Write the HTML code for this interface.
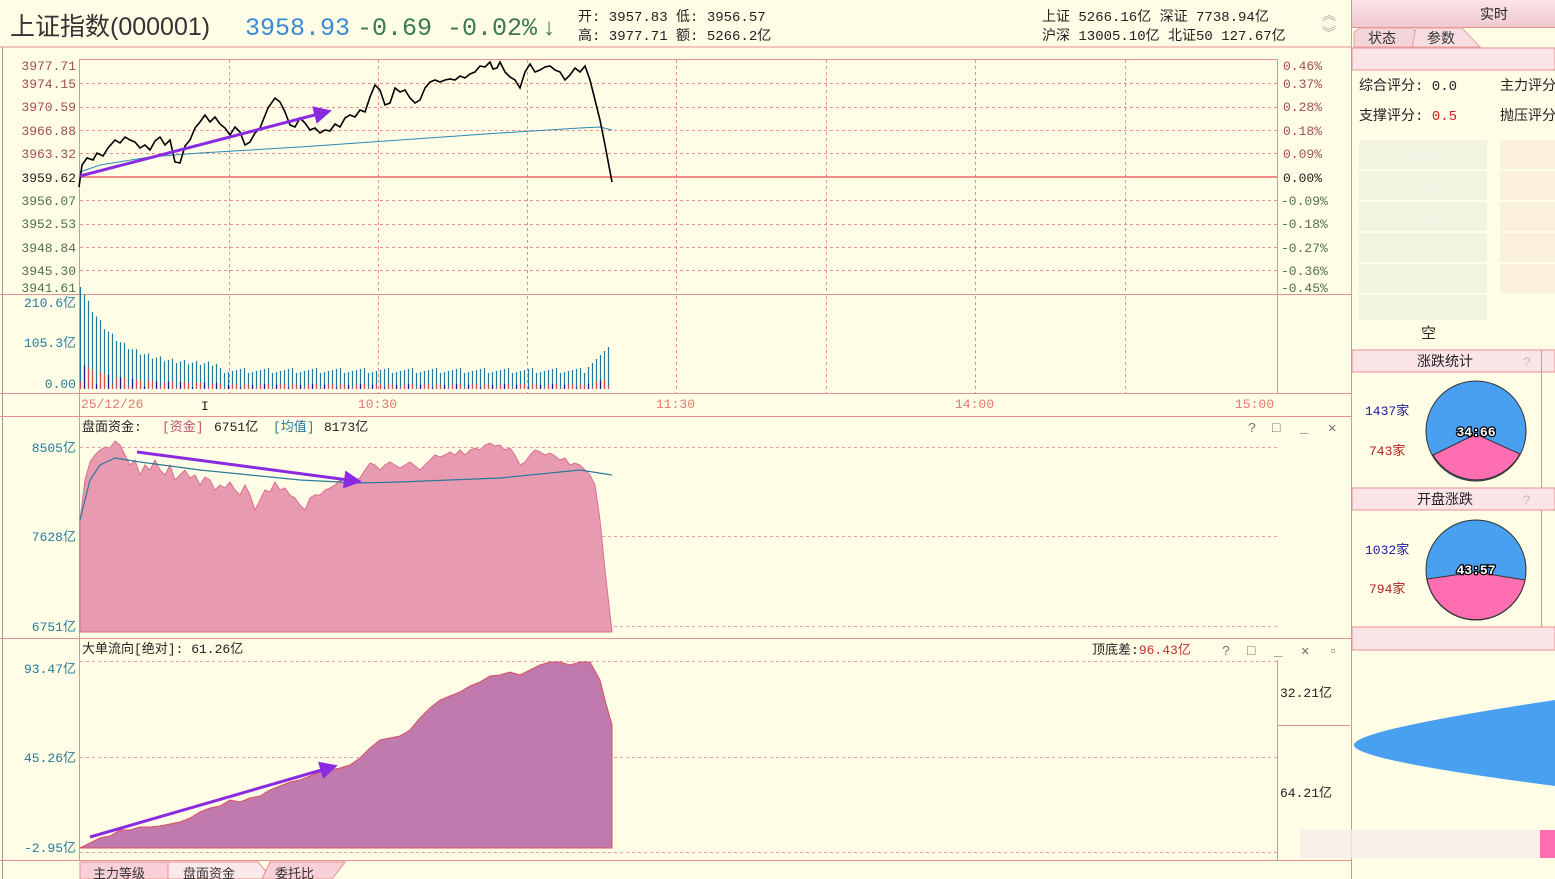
<!DOCTYPE html>
<html><head><meta charset="utf-8"><style>
html,body{margin:0;padding:0;background:#fffde6;width:1555px;height:879px;overflow:hidden}
svg{display:block;font-family:"Liberation Mono","Noto Sans CJK SC",monospace}
.pl{paint-order:stroke;stroke:#000;stroke-width:2.5px;fill:#fff;font-weight:bold}
</style></head><body>
<svg width="1555" height="879" viewBox="0 0 1555 879" xmlns="http://www.w3.org/2000/svg">
<defs>
<linearGradient id="hg" x1="0" y1="0" x2="0" y2="1"><stop offset="0" stop-color="#fbe6ea"/><stop offset="1" stop-color="#f0c8d0"/></linearGradient>
<marker id="ah" markerWidth="6" markerHeight="6" refX="4" refY="3" orient="auto"><path d="M0,0 L6,3 L0,6 z" fill="#8a2be2"/></marker>
</defs>
<rect width="1555" height="879" fill="#fffde6"/>
<line x1="0" y1="47" x2="1352" y2="47" stroke="#e89090"/>
<text x="10" y="35" font-size="25" fill="#333" font-family="Liberation Sans,Noto Sans CJK SC,sans-serif">上证指数(000001)</text>
<text x="245" y="35" font-size="25" fill="#3a8ad8">3958.93</text>
<text x="357" y="35" font-size="25" fill="#3a7a50">-0.69  -0.02%</text>
<text x="542" y="35" font-size="24" fill="#3a7a50">↓</text>
<g font-size="14" fill="#222"><text x="578" y="21">开: 3957.83  低: 3956.57</text><text x="578" y="40">高: 3977.71  额: 5266.2亿</text>
<text x="1042" y="21">上证 5266.16亿  深证 7738.94亿</text><text x="1042" y="40">沪深 13005.10亿  北证50 127.67亿</text></g>
<text x="1322" y="20" font-size="14" fill="#aaa">︽</text><text x="1322" y="38" font-size="14" fill="#aaa">︾</text>
<line x1="1351.5" y1="0" x2="1351.5" y2="879" stroke="#e89090"/>
<line x1="2.5" y1="47" x2="2.5" y2="879" stroke="#999"/>
<rect x="79.5" y="59.5" width="1198" height="235" fill="none" stroke="#e89090"/>
<g stroke="#e89090" stroke-dasharray="3,3" fill="none">
<path d="M80 83.5H1277M80 107.5H1277M80 130.5H1277M80 153.5H1277M80 200.5H1277M80 224.5H1277M80 247.5H1277M80 270.5H1277"/>
<path d="M229.5 60V294M378.5 60V294M527.5 60V294M676.5 60V294M826.5 60V294M975.5 60V294M1125.5 60V294"/>
<path d="M229.5 296V393M378.5 296V393M527.5 296V393M676.5 296V393M826.5 296V393M975.5 296V393M1125.5 296V393"/>
</g>
<line x1="80" y1="177" x2="1277" y2="177" stroke="#e86a6a" stroke-width="1.5"/>
<g font-size="13" fill="#a05050" text-anchor="end">
<text x="76" y="70">3977.71</text><text x="76" y="88">3974.15</text><text x="76" y="111">3970.59</text><text x="76" y="135">3966.88</text><text x="76" y="158">3963.32</text><text x="76" y="182" fill="#222">3959.62</text>
<text x="76" y="205" fill="#507050">3956.07</text><text x="76" y="228" fill="#507050">3952.53</text><text x="76" y="252" fill="#507050">3948.84</text><text x="76" y="275" fill="#507050">3945.30</text><text x="76" y="292" fill="#507050">3941.61</text></g>
<g font-size="13" fill="#a05050"><text x="1283" y="70">0.46%</text><text x="1283" y="88">0.37%</text><text x="1283" y="111">0.28%</text><text x="1283" y="135">0.18%</text><text x="1283" y="158">0.09%</text><text x="1283" y="182" fill="#222">0.00%</text>
<g fill="#507050"><text x="1281" y="205">-0.09%</text><text x="1281" y="228">-0.18%</text><text x="1281" y="252">-0.27%</text><text x="1281" y="275">-0.36%</text><text x="1281" y="292">-0.45%</text></g></g>
<polyline fill="none" stroke="#2a8ab0" stroke-width="1" points="80,172 100,165 150,157 200,153 300,147 400,140 500,133 580,128 600,127 612,130"/>
<polyline fill="none" stroke="#000" stroke-width="1.6" points="79,187 82,165 87,158 93,160 97,153 103,156 108,148 115,140 120,143 125,137 130,140 135,142 140,148 145,145 150,150 155,141 160,137 165,145 170,140 175,162 180,163 185,146 190,140 195,128 200,122 205,115 210,122 215,117 220,124 225,128 230,135 235,127 240,132 245,145 250,142 255,133 260,128 268,108 275,98 280,102 285,112 290,125 295,127 300,118 305,123 310,130 315,128 320,133 325,130 330,131 335,124 340,127 345,118 350,115 355,117 360,110 365,112 370,97 375,85 380,90 385,105 390,103 395,88 400,92 405,90 410,98 415,103 420,100 425,88 430,82 435,80 440,82 445,80 450,79 455,80 460,76 465,78 470,74 475,72 480,66 485,67 490,62 493,69 497,68 500,62 505,72 510,77 515,80 520,88 525,72 530,64 535,72 540,70 545,67 550,66 555,70 560,72 565,80 570,75 575,68 580,72 585,66 590,80 595,100 600,120 605,145 612,182"/>
<line x1="80" y1="176" x2="326" y2="112" stroke="#8a2be2" stroke-width="3" marker-end="url(#ah)"/>
<line x1="0" y1="294.5" x2="1352" y2="294.5" stroke="#e89090"/>
<line x1="0" y1="393.5" x2="1352" y2="393.5" stroke="#e89090"/>
<line x1="1277.5" y1="295" x2="1277.5" y2="393" stroke="#e89090"/>
<g font-size="13" fill="#2a7a9a" text-anchor="end"><text x="76" y="307">210.6亿</text><text x="76" y="347">105.3亿</text><text x="76" y="388">0.00</text></g>
<g id="vb"></g>
<line x1="79.5" y1="295" x2="79.5" y2="860" stroke="#e89090"/>
<g font-size="13" fill="#e07a70"><text x="81" y="408">25/12/26</text><text x="358" y="408">10:30</text><text x="656" y="408">11:30</text><text x="955" y="408">14:00</text><text x="1235" y="408">15:00</text></g>
<text x="201" y="410" font-size="13" fill="#222">I</text>
<line x1="0" y1="416.5" x2="1352" y2="416.5" stroke="#e89090"/>
<g font-size="13"><text x="82" y="431" fill="#222">盘面资金:</text><text x="162" y="431" fill="#c05070">[资金]</text><text x="214" y="431" fill="#222">6751亿</text><text x="273" y="431" fill="#2a7a9a">[均值]</text><text x="324" y="431" fill="#222">8173亿</text></g>
<g font-size="14" fill="#777"><text x="1248" y="432">?</text><text x="1272" y="432">□</text><text x="1300" y="432">_</text><text x="1328" y="432">✕</text></g>
<g stroke="#e8a0a0" stroke-dasharray="3,3"><line x1="80" y1="447.5" x2="1277" y2="447.5"/><line x1="80" y1="536.5" x2="1277" y2="536.5"/><line x1="80" y1="626.5" x2="1277" y2="626.5"/></g>
<g font-size="13" fill="#2a7a9a" text-anchor="end"><text x="76" y="452">8505亿</text><text x="76" y="541">7628亿</text><text x="76" y="631">6751亿</text></g>
<polygon fill="#e89ab0" stroke="#d87090" points="80,632 80,520 85,480 90,462 95,455 100,450 105,447 110,448 115,441 120,445 125,455 130,465 135,460 140,475 145,465 150,470 155,460 160,470 165,475 170,465 175,480 180,475 185,470 190,478 195,475 200,485 205,477 210,480 215,490 220,485 225,488 230,482 235,490 240,495 245,485 250,495 255,510 260,500 265,490 270,492 275,482 280,490 285,488 290,495 295,498 300,505 305,510 310,498 315,495 320,495 325,490 330,488 335,485 340,480 345,485 350,482 355,480 360,478 365,470 370,463 375,465 380,470 385,465 390,462 395,465 400,468 405,465 410,462 415,466 420,470 425,465 430,460 435,455 440,457 445,455 450,452 455,455 460,450 465,455 470,450 475,448 480,450 485,445 490,443 495,446 500,445 505,450 510,448 515,455 520,465 525,462 530,455 535,450 540,452 545,455 550,453 555,456 560,460 565,458 570,465 575,463 580,465 585,470 590,475 595,485 600,520 605,570 612,632"/>
<polyline fill="none" stroke="#2a7a9a" stroke-width="1.2" points="80,520 90,480 100,465 115,458 140,462 200,470 300,480 360,483 400,482 500,478 580,470 612,475"/>
<line x1="137" y1="452" x2="356" y2="481" stroke="#8a2be2" stroke-width="3" marker-end="url(#ah)"/>
<line x1="0" y1="638.5" x2="1352" y2="638.5" stroke="#e89090"/>
<text x="82" y="653" font-size="13" fill="#222">大单流向[绝对]:  61.26亿</text>
<text x="1092" y="654" font-size="13" fill="#222">顶底差:<tspan fill="#c03030">96.43亿</tspan></text>
<g font-size="14" fill="#777"><text x="1222" y="655">?</text><text x="1247" y="655">□</text><text x="1274" y="655">_</text><text x="1301" y="655">✕</text><text x="1329" y="655">▫</text></g>
<g stroke="#e8a0a0" stroke-dasharray="3,3"><line x1="80" y1="661.5" x2="1277" y2="661.5"/><line x1="80" y1="757.5" x2="1277" y2="757.5"/><line x1="80" y1="852.5" x2="1277" y2="852.5"/></g>
<g font-size="13" fill="#2a7a9a" text-anchor="end"><text x="76" y="673">93.47亿</text><text x="76" y="762">45.26亿</text><text x="76" y="852">-2.95亿</text></g>
<polygon fill="#c07aae" stroke="#d85060" points="80,848 90,843 100,838 110,836 120,830 130,830 140,827 150,827 160,826 170,824 180,822 190,818 200,812 210,808 220,806 230,800 240,802 250,798 260,796 270,790 280,786 290,782 300,780 310,776 320,772 330,770 340,768 350,765 360,758 370,748 380,740 390,738 400,736 410,730 420,718 430,708 440,700 450,696 460,692 470,686 480,682 490,676 500,675 510,672 520,675 530,670 540,665 550,662 560,662 570,665 580,662 590,662 600,680 605,700 612,725 612,848"/>
<line x1="90" y1="837" x2="332" y2="767" stroke="#8a2be2" stroke-width="3" marker-end="url(#ah)"/>
<line x1="1277.5" y1="660" x2="1277.5" y2="860" stroke="#e89090"/>
<line x1="1278" y1="725.5" x2="1350" y2="725.5" stroke="#e89090"/>
<g font-size="13" fill="#222"><text x="1280" y="697">32.21亿</text><text x="1280" y="797">64.21亿</text></g>
<line x1="0" y1="860.5" x2="1352" y2="860.5" stroke="#e89090"/>
<path d="M80 879V862H168V879Z" fill="#f8d0d8" stroke="#e89090"/>
<path d="M168 879V862H258L272 879Z" fill="#fbe8ea" stroke="#e89090"/>
<path d="M262 879L270 862H345L332 879Z" fill="#f8d0d8" stroke="#e89090"/>
<g font-size="13" fill="#333"><text x="93" y="878">主力等级</text><text x="183" y="878">盘面资金</text><text x="275" y="878">委托比</text></g>
<rect x="1352" y="0" width="203" height="27" fill="url(#hg)"/>
<text x="1480" y="19" font-size="14" fill="#222">实时</text>
<line x1="1352" y1="27.5" x2="1555" y2="27.5" stroke="#e89090"/>
<path d="M1354 47V32L1360 28H1412L1430 47Z" fill="#f3d5da" stroke="#e8a0a0"/>
<path d="M1412 47L1416 28H1462L1480 47Z" fill="#f8dde2" stroke="#e8a0a0"/>
<g font-size="14" fill="#333"><text x="1368" y="43">状态</text><text x="1427" y="43">参数</text></g>
<rect x="1352" y="48" width="203" height="22" fill="#fbe4e8" stroke="#e89090"/>
<g font-size="14" fill="#222"><text x="1359" y="90">综合评分:  0.0</text><text x="1500" y="90">主力评分</text><text x="1359" y="120">支撑评分:  <tspan fill="#d02020">0.5</tspan></text><text x="1500" y="120">抛压评分</text></g>
<g fill="#f1f4e0"><rect x="1359" y="140" width="128" height="29"/><rect x="1359" y="171" width="128" height="29"/><rect x="1359" y="202" width="128" height="29"/><rect x="1359" y="233" width="128" height="29"/><rect x="1359" y="264" width="128" height="29"/><rect x="1359" y="295" width="128" height="25"/></g>
<g fill="#fbf0dc"><rect x="1500" y="140" width="55" height="29"/><rect x="1500" y="171" width="55" height="29"/><rect x="1500" y="202" width="55" height="29"/><rect x="1500" y="233" width="55" height="29"/><rect x="1500" y="264" width="55" height="29"/></g>
<g font-size="13" fill="#f6f7ea"><text x="1410" y="160">-2.5</text><text x="1410" y="191">-2.0</text><text x="1410" y="222">-1.5</text><text x="1410" y="253">-1.0</text><text x="1410" y="284">-0.5</text></g>
<text x="1421" y="338" font-size="15" fill="#222">空</text>
<rect x="1352" y="350" width="203" height="22" fill="#fbe4e8" stroke="#e89090"/>
<text x="1417" y="366" font-size="14" fill="#222">涨跌统计</text><text x="1523" y="366" font-size="13" fill="#bbb">?</text>
<line x1="1541.5" y1="350" x2="1541.5" y2="627" stroke="#e89090"/>
<text x="1365" y="415" font-size="13" fill="#1a1aa0">1437家</text><text x="1369" y="455" font-size="13" fill="#b02020">743家</text>
<circle cx="1476" cy="431" r="50" fill="#4aa0f0" stroke="#333"/>
<path d="M1476 434 L1433 455 A50 50 0 0 0 1520 454 Z" fill="#ff6eb0" stroke="#333"/>
<text x="1476" y="436" font-size="13" class="pl" text-anchor="middle">34:66</text>
<rect x="1352" y="488" width="203" height="22" fill="#fbe4e8" stroke="#e89090"/>
<text x="1417" y="504" font-size="14" fill="#222">开盘涨跌</text><text x="1523" y="504" font-size="13" fill="#bbb">?</text>
<text x="1365" y="554" font-size="13" fill="#1a1aa0">1032家</text><text x="1369" y="593" font-size="13" fill="#b02020">794家</text>
<circle cx="1476" cy="570" r="50" fill="#4aa0f0" stroke="#333"/>
<path d="M1476 572 L1427 579 A50 50 0 0 0 1525 580 Z" fill="#ff6eb0" stroke="#333"/>
<text x="1476" y="574" font-size="13" class="pl" text-anchor="middle">43:57</text>
<rect x="1352" y="627" width="203" height="23" fill="#fbe4e8" stroke="#e89090"/>
<path d="M1555 700 Q1354 730 1354 745 Q1354 760 1555 786 Z" fill="#4aa0f0"/>
<rect x="1300" y="830" width="240" height="28" fill="#f8ecea" opacity="0.8"/>
<rect x="1540" y="830" width="15" height="28" fill="#ff6eb0"/>
</svg>
<script>
(function(){var g=document.getElementById('vb'),s='';
for(var i=0;i<133;i++){var x=80.5+i*4;var h;
if(i<35)h=80*Math.exp(-i/8)+22+(i%3)*2;else h=16+((i*7)%6);
if(i>126)h=18+(i-126)*4;
var top=389-h;var rh=Math.min(h*0.25,26)*(i%4==0?0.3:1);
s+='<line x1="'+x+'" y1="389" x2="'+x+'" y2="'+top.toFixed(1)+'" stroke="#1f7aa0" stroke-width="1.2"/>';
s+='<line x1="'+x+'" y1="389" x2="'+x+'" y2="'+(389-rh).toFixed(1)+'" stroke="'+(i%3==1?'#1a1a90':'#d05050')+'" stroke-width="1.2"/>';}
g.innerHTML=s;})();
</script>
</body></html>
